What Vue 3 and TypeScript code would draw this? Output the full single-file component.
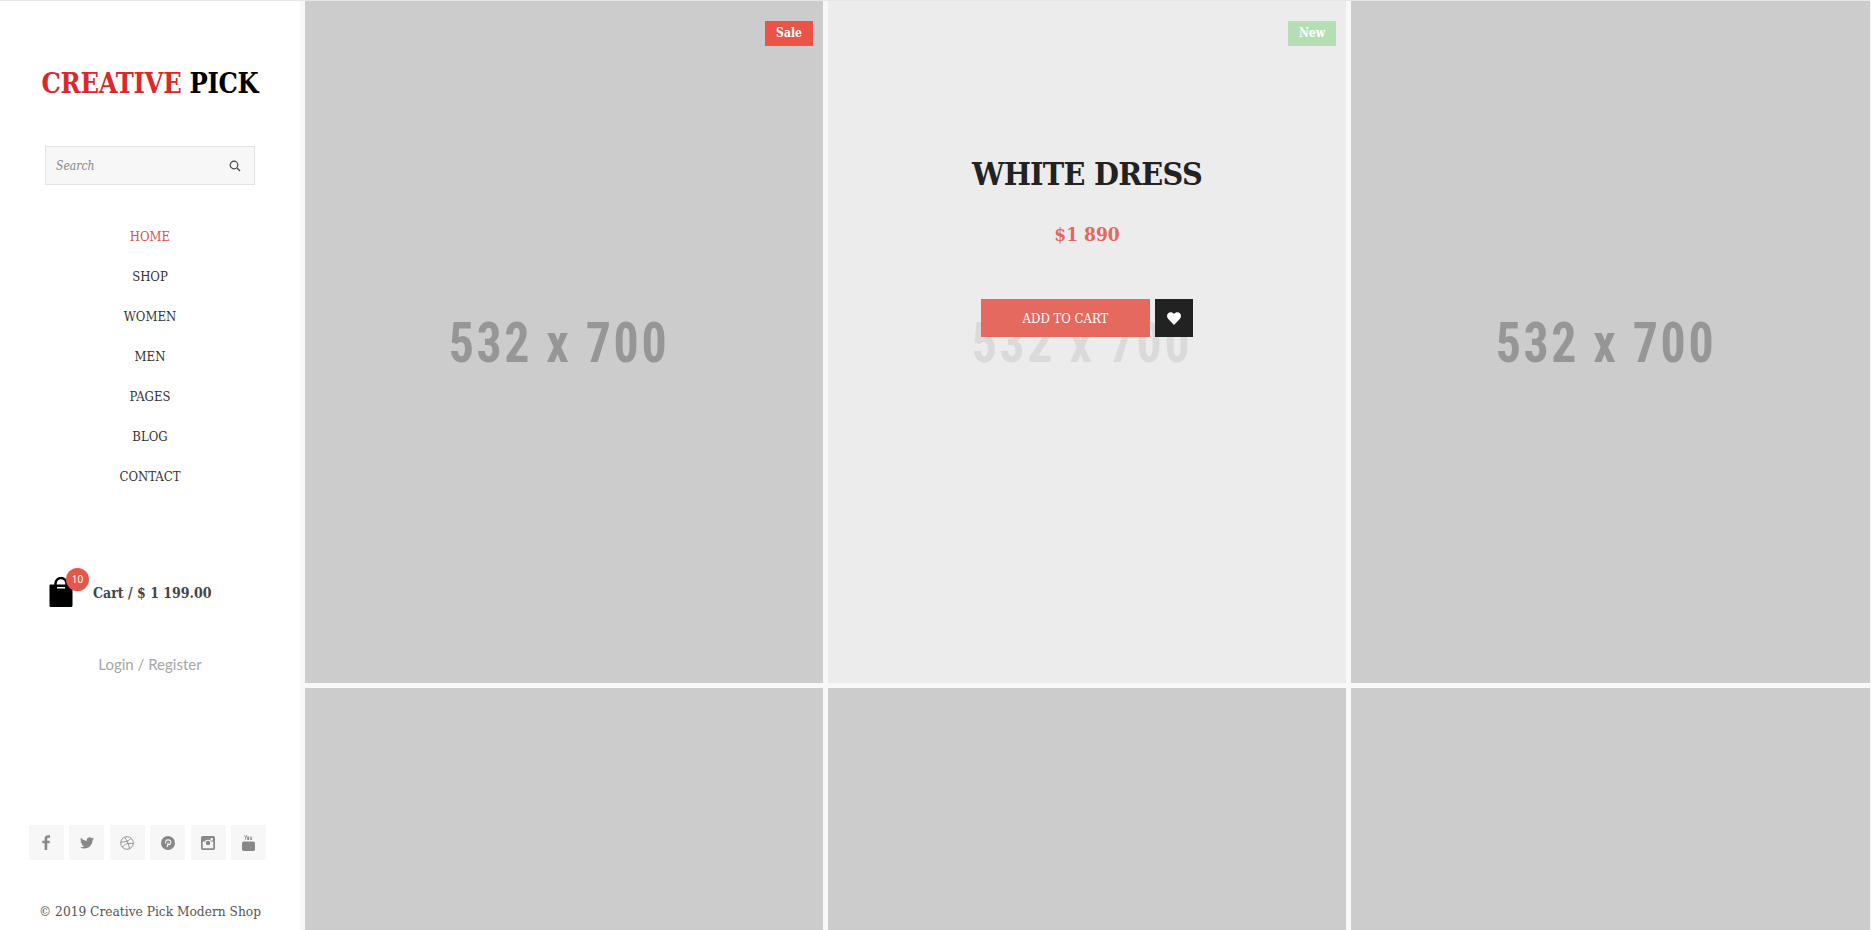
<script setup lang="ts">
interface Tile {
  id: number
  label?: string
  badge?: string
  badgeClass?: string
  hover?: boolean
}

const navItems = ['HOME', 'SHOP', 'WOMEN', 'MEN', 'PAGES', 'BLOG', 'CONTACT']

const tiles: Tile[] = [
  { id: 1, label: '532 x 700', badge: 'Sale', badgeClass: 'badge--sale' },
  { id: 2, label: '532 x 700', badge: 'New', badgeClass: 'badge--new', hover: true },
  { id: 3, label: '532 x 700' },
  { id: 4 },
  { id: 5 },
  { id: 6 },
]
</script>

<template>
  <div class="page">
    <aside class="sidebar">
      <h1 class="logo"><span class="logo-red">CREATIVE</span> PICK</h1>

      <div class="search">
        <span class="search-text">Search</span>
        <svg class="search-icon" viewBox="0 0 12 12" fill="none" stroke="#444" stroke-width="1.2">
          <circle cx="5" cy="5" r="3.8" />
          <path d="M8 8l3 3" />
        </svg>
      </div>

      <nav class="nav">
        <a v-for="(item, idx) in navItems" :key="item" class="nav-link" :class="{ active: idx === 0 }">{{ item }}</a>
      </nav>

      <div class="cart">
        <div class="cart-icon">
          <svg viewBox="0 0 24 30" width="24" height="30">
            <path d="M6.500 9V6.500a5.500 5.500 0 0 1 11 0V9" fill="none" stroke="#000" stroke-width="2.400" />
            <path d="M1.500 7.500h21a1 1 0 0 1 1 1V28.500a1.500 1.500 0 0 1-1.500 1.500H2A1.500 1.500 0 0 1 .5 28.500V8.500a1 1 0 0 1 1-1z" fill="#000" />
            <rect x="8" y="10" width="8" height="1.500" fill="#fff" />
          </svg>
          <span class="cart-count">10</span>
        </div>
        <span class="cart-text">Cart / $ 1 199.00</span>
      </div>

      <a class="login">Login / Register</a>

      <div class="socials">
        <a class="social">
          <svg viewBox="0 0 12 20" width="9" height="15" fill="#888"><path d="M3.500 20v-9H.5V7.500h3V5c0-3 1.800-4.700 4.500-4.700 1.300 0 2.400.1 2.700.1v3.200H8.800c-1.500 0-1.800.7-1.800 1.800v2.100h3.500L10 11H7v9z" /></svg>
        </a>
        <a class="social">
          <svg viewBox="0 0 24 20" width="14" height="12" fill="#888"><path d="M24 2.400c-.9.400-1.800.7-2.800.8 1-.6 1.800-1.600 2.200-2.700-1 .6-2 1-3.100 1.200A4.900 4.900 0 0 0 11.900 6.200C7.800 6 4.200 4 1.700.9c-1.300 2.200-.7 5.100 1.500 6.600-.8 0-1.600-.2-2.200-.6 0 2.400 1.700 4.400 3.900 4.900-.7.200-1.500.2-2.200.1.600 2 2.400 3.400 4.600 3.400A9.900 9.900 0 0 1 0 17.300 14 14 0 0 0 7.500 19.500c9.100 0 14.300-7.700 14-14.600 1-.7 1.800-1.600 2.500-2.500z" /></svg>
        </a>
        <a class="social">
          <svg viewBox="0 0 20 20" width="14" height="14" fill="none" stroke="#888" stroke-width="1.300">
            <circle cx="10" cy="10" r="9" />
            <path d="M6.500 1.800c3 3.500 6 9.500 7.200 16.500M1.200 8.500c5 .3 10-.5 14-4.500M3.500 16c3-4.500 8-6.500 15.400-5" />
          </svg>
        </a>
        <a class="social">
          <svg viewBox="0 0 20 20" width="14" height="14"><circle cx="10" cy="10" r="10" fill="#888" /><path d="M8.700 16l1.600-7M7 10.500c-1.500-2.500.3-5 3.300-5 2.700 0 4 1.800 3.600 4-.4 2.400-2.700 3.600-4.100 2.200" fill="none" stroke="#f7f7f7" stroke-width="1.600" /></svg>
        </a>
        <a class="social">
          <svg viewBox="0 0 20 20" width="14" height="14">
            <rect width="20" height="20" rx="2.500" fill="#888" />
            <rect x="2.500" y="8" width="15" height="9.500" fill="#f7f7f7" />
            <circle cx="10" cy="10" r="4" fill="#888" stroke="#f7f7f7" stroke-width="1.500" />
            <rect x="13.500" y="3" width="3.500" height="3.500" fill="#f7f7f7" />
          </svg>
        </a>
        <a class="social">
          <svg viewBox="0 0 18 22" width="13" height="16" fill="#888">
            <path d="M4 0l1.200 3L6.400 0h1L5.700 4.300V7h-1V4.300L3 0zM8.500 2c.9 0 1.300.6 1.300 1.300v2.400c0 .8-.4 1.300-1.300 1.300S7.200 6.500 7.200 5.700V3.300C7.200 2.600 7.600 2 8.500 2zM11 2h1v4.200l1-.4V2h1v5h-1v-.5l-1 .5h-1z" />
            <rect x="0" y="9" width="18" height="13" rx="2.500" />
          </svg>
        </a>
      </div>

      <p class="copyright">© 2019 Creative Pick Modern Shop</p>
    </aside>

    <main class="grid">
      <article v-for="tile in tiles" :key="tile.id" class="tile" :class="{ 'tile--hover': tile.hover }">
        <span v-if="tile.label" class="placeholder">{{ tile.label }}</span>
        <span v-if="tile.badge" class="badge" :class="tile.badgeClass">{{ tile.badge }}</span>
        <div v-if="tile.hover" class="overlay">
          <h2 class="product-name">WHITE DRESS</h2>
          <p class="product-price">$1 890</p>
          <div class="actions">
            <button class="add-btn">ADD TO CART</button>
            <button class="heart-btn">
              <svg viewBox="0 0 24 22" width="14" height="13" fill="#fff"><path d="M12 22L2.200 12C-.7 9-.7 4.500 2 2c2.700-2.600 6.800-2.500 10 1 3.200-3.500 7.300-3.600 10-1 2.700 2.500 2.700 7-.2 10z" /></svg>
            </button>
          </div>
        </div>
      </article>
    </main>
  </div>
</template>

<style>
html,
body {
  margin: 0;
  background: #fff;
  overflow: hidden;
}
</style>

<style scoped>
.page {
  display: flex;
  height: 930px;
  overflow: hidden;
  font-family: 'DejaVu Serif Condensed', 'DejaVu Serif', serif;
  border-top: 1px solid #e6e6e6;
  box-sizing: border-box;
}

.sidebar {
  width: 300px;
  flex: none;
  display: flex;
  flex-direction: column;
  align-items: center;
  background: #fff;
}

.logo {
  margin: 67px 0 0;
  font-size: 27px;
  line-height: 32px;
  font-weight: 700;
  color: #000;
  letter-spacing: -0.3px;
}

.logo-red {
  color: #d9292b;
}

.search {
  margin-top: 46px;
  width: 210px;
  height: 39px;
  box-sizing: border-box;
  border: 1px solid #e4e4e4;
  background: #f7f7f7;
  display: flex;
  align-items: center;
  justify-content: space-between;
  padding: 0 13px 0 10px;
}

.search-text {
  font-size: 12px;
  font-style: italic;
  color: #888;
}

.search-icon {
  width: 12px;
  height: 12px;
}

.nav {
  margin-top: 42px;
  display: flex;
  flex-direction: column;
  align-items: center;
  gap: 20px;
}

.nav-link {
  font-size: 13px;
  line-height: 20px;
  color: #333;
}

.nav-link.active {
  color: #d9534f;
}

.cart {
  margin-top: 90px;
  display: flex;
  align-items: flex-end;
  width: 210px;
  padding-left: 4px;
  box-sizing: border-box;
}

.cart-icon {
  position: relative;
  width: 24px;
  height: 30px;
  margin-right: 20px;
}

.cart-count {
  position: absolute;
  top: -9px;
  left: 17px;
  width: 23px;
  height: 23px;
  border-radius: 50%;
  background: #e4574a;
  color: #fff;
  font-family: 'Noto Sans', sans-serif;
  font-size: 10px;
  line-height: 23px;
  text-align: center;
}

.cart-text {
  font-size: 14px;
  line-height: 24px;
  font-weight: 700;
  color: #444;
  padding-bottom: 2px;
}

.login {
  margin-top: 47px;
  font-family: Lato, sans-serif;
  font-size: 15px;
  line-height: 20px;
  color: #a6a6a6;
}

.socials {
  margin-top: auto;
  margin-right: 5px;
  display: flex;
  gap: 5.4px;
}

.social {
  width: 35px;
  height: 35px;
  background: #f7f7f7;
  display: flex;
  align-items: center;
  justify-content: center;
}

.copyright {
  margin: 41px 0 9px;
  font-size: 13.6px;
  line-height: 20px;
  color: #555;
}

.grid {
  flex: 1;
  min-width: 0;
  background: #f8f8f8;
  padding-left: 5px;
  display: grid;
  grid-template-columns: 518px 518px 519px;
  grid-auto-rows: 682px;
  gap: 5px;
}

.tile {
  position: relative;
  background: #ccc;
  display: flex;
  align-items: center;
  justify-content: center;
}

.placeholder {
  margin: 2px 10px 0 0;
  font-family: Roboto, sans-serif;
  font-stretch: condensed;
  font-size: 56px;
  font-weight: 700;
  letter-spacing: 3px;
  color: #969696;
  transform: scaleX(0.89);
}

.tile--hover .placeholder {
  color: #dadada;
}

.badge {
  position: absolute;
  top: 20px;
  right: 10px;
  width: 48px;
  height: 25px;
  color: #fff;
  font-size: 12px;
  font-weight: 700;
  line-height: 25px;
  text-align: center;
}

.badge--sale {
  background: #ec5347;
}

.badge--new {
  background: #b4dfb4;
}

.tile--hover {
  background: #ececec;
}

.overlay {
  position: absolute;
  inset: 0;
  display: flex;
  flex-direction: column;
  align-items: center;
}

.product-name {
  margin: 153px 0 0;
  font-size: 32px;
  line-height: 40px;
  font-weight: 700;
  letter-spacing: -0.75px;
  color: #222;
}

.product-price {
  margin: 26px 0 0;
  font-size: 19px;
  line-height: 28px;
  font-weight: 700;
  color: #e4685d;
}

.actions {
  margin-top: 51px;
  display: flex;
  gap: 5px;
}

.add-btn {
  width: 169px;
  height: 38px;
  border: 0;
  padding: 0;
  background: #e5695e;
  color: #fff;
  font: inherit;
  font-size: 13px;
}

.heart-btn {
  width: 38px;
  height: 38px;
  border: 0;
  padding: 0;
  background: #222;
  display: flex;
  align-items: center;
  justify-content: center;
}
</style>
